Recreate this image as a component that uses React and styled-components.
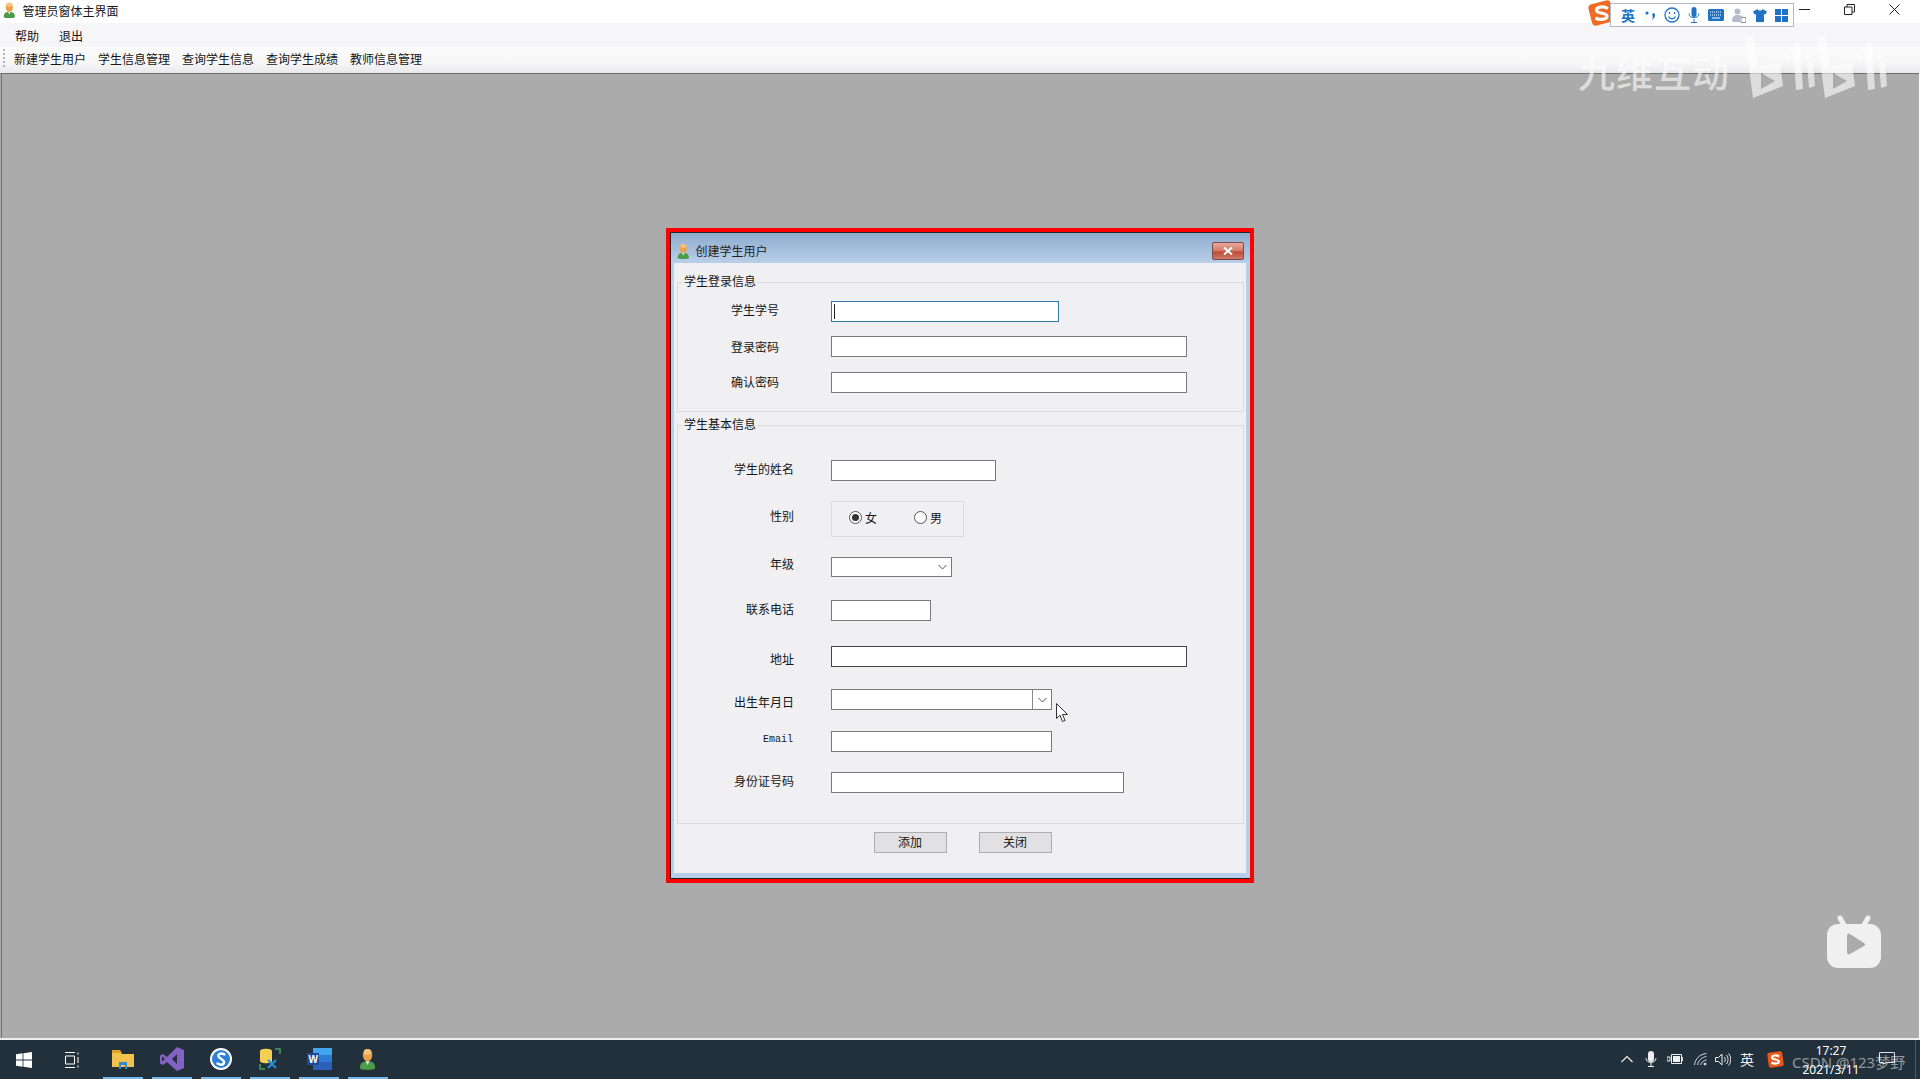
import React from "react";
import styled, { createGlobalStyle } from "styled-components";

const Global = createGlobalStyle`
  html, body { margin: 0; padding: 0; height: 100%; overflow: hidden; background: #fff; }
  body { font-family: "Noto Sans CJK SC", "Noto Sans", sans-serif; font-size: 12px; color: #151515; }
  * { box-sizing: border-box; }
`;

const Screen = styled.div`
  position: relative; width: 1920px; height: 1079px; display: flex; flex-direction: column; overflow: hidden; background: #fff;
`;
const TitleBar = styled.header`
  height: 23px; flex: none; display: flex; align-items: center; padding: 0 0 2px 3px; background: #fff; line-height: 16px;
`;
const TitleText = styled.span` margin-left: 7px; `;
const WindowControls = styled.div`
  margin-left: auto; display: flex; align-items: center; height: 20px; margin-top: -3px; padding-right: 20px; gap: 34px;
`;
const MenuBar = styled.nav`
  height: 24px; flex: none; display: flex; align-items: center; padding-left: 15px; gap: 20px; background: #f6f6f8;
`;
const Toolbar = styled.div`
  height: 26px; flex: none; display: flex; align-items: center; padding: 0 0 3px 3px;
  background: linear-gradient(#fbfbfc, #f7f7f8 60%, #e9e9eb);
`;
const Grip = styled.div`
  width: 2px; height: 20px; margin-right: 9px; background: repeating-linear-gradient(#b5b5b5 0 2px, transparent 2px 4px);
`;
const ToolItem = styled.span` width: 84px; flex: none; `;
const MdiArea = styled.main`
  position: relative; flex: 1; margin-right: 1px; background: #ababab;
  border-top: 1px solid #6e6e6e; border-left: 1px solid #ababab;
  box-shadow: inset 1px 0 0 #707070;
`;
const BottomEdge = styled.div` height: 2px; flex: none; background: #eef0f1; `;
const Taskbar = styled.footer`
  height: 39px; flex: none; position: relative; display: flex; align-items: center; background: #22303c; color: #fff;
`;
const StartSlot = styled.div` width: 103px; display: flex; justify-content: flex-start; padding-left: 16px; gap: 32px; `;
const AppSlot = styled.div`
  width: 40px; height: 39px; margin-right: 9px; display: flex; align-items: center; justify-content: center; padding-top: 1px;
  border-bottom: 2px solid #76b9ed;
`;
const Tray = styled.div`
  margin-left: auto; height: 39px; display: flex; align-items: center; padding-bottom: 1px; padding-right: 136px;
`;
const TrayItem = styled.span` display: flex; align-items: center; margin-left: ${p => p.$ml}px; `;
const TrayLang = styled.span` font-size: 14px; line-height: 16px; color: #f2f2f2; `;
const Clock = styled.div`
  position: absolute; left: 1801px; top: 1px; width: 60px; text-align: center; font-family: "Noto Sans", sans-serif;
  font-size: 12px; line-height: 19px; color: #fff;
`;
const NotifyIcon = styled.div` position: absolute; left: 1879px; top: 12px; `;
const TrayEnd = styled.div` position: absolute; left: 1915px; top: 0; width: 1px; height: 39px; background: #4a5a68; `;
const CsdnMark = styled.div`
  position: absolute; left: 1792px; top: 1053px; font-family: "Noto Sans", "Noto Sans CJK SC", sans-serif; font-size: 15px; line-height: 18px;
  color: rgba(255,255,255,.5); white-space: nowrap;
`;

const Dialog = styled.section`
  position: absolute; left: 665px; top: 154px; width: 588px; height: 655px; border: 4px solid #f00; background: #b9cfe9;
  display: flex; flex-direction: column;
`;
const DialogFrame = styled.div`
  flex: 1; display: flex; flex-direction: column; border-top: 1px solid #222; border-left: 1px solid #222; border-bottom: 1px solid #222;
`;
const DialogTitle = styled.div`
  height: 30px; flex: none; display: flex; align-items: center; padding: 6px 6px 0 6px; line-height: 16px; color: #222;
  background: linear-gradient(#8dabcd, #b9cfe9);
`;
const DialogTitleText = styled.span` margin-left: 6px; `;
const CloseButton = styled.div`
  margin-left: auto; width: 32px; height: 18px; display: flex; align-items: center; justify-content: center; margin-top: -1px;
  border: 1px solid #7c4a48; border-radius: 2px; background: linear-gradient(#e6a99d, #d27766 50%, #bd4a38 55%, #cf7a66);
`;
const Client = styled.div`
  height: 610px; margin: 0 4px 0 3px; padding: 19px 2px 0 3px; background: #f0f0f3;
`;
const Group = styled.div`
  position: relative; height: ${p => p.$h}px; margin-bottom: ${p => p.$mb}px; border: 1px solid #dcdcde;
`;
const Legend = styled.span`
  position: absolute; left: 5px; top: -10px; padding: 0 1px; line-height: 16px; background: #f0f0f3;
`;
const Row = styled.div`
  display: grid; grid-template-columns: 153px 1fr; align-items: start; margin-top: ${p => p.$mt}px;
`;
const Label = styled.label`
  text-align: right; line-height: 16px; padding-right: ${p => p.$pr || 37}px; margin-top: ${p => p.$lt}px;
`;
const MonoLabel = styled(Label)` font-family: "Liberation Mono", monospace; font-size: 10px; `;
const TextBox = styled.input`
  display: block; width: ${p => p.$w}px; height: 21px; padding: 0; margin: 0; outline: none; border-radius: 0;
  border: 1px solid ${p => (p.$focus ? "#2b79ad" : p.$dark ? "#444" : "#7a7a7a")};
  background: ${p => (p.$focus ? "linear-gradient(#222,#222) 2px 2px / 1px 15px no-repeat, #fff" : "#fff")};
`;
const RadioPanel = styled.div`
  width: 133px; height: 36px; display: flex; align-items: center; padding: 0 0 3px 17px; border: 1px solid #dcdcde;
`;
const RadioOption = styled.span` flex: none; display: flex; align-items: center; gap: 3px; width: 65px; line-height: 16px; `;
const RadioMark = styled.span`
  width: 13px; height: 13px; border-radius: 50%; border: 1px solid #555; background: #fff; display: flex; align-items: center; justify-content: center;
  &::after { content: ""; width: 7px; height: 7px; border-radius: 50%; background: ${p => (p.$on ? "#333" : "transparent")}; }
`;
const Combo = styled.div`
  width: ${p => p.$w}px; height: ${p => p.$h}px; display: flex; justify-content: flex-end; border: 1px solid #7a7a7a; background: #fff;
`;
const ComboArrow = styled.div`
  width: ${p => p.$w}px; display: flex; align-items: center; justify-content: center; ${p => p.$split && "border-left: 1px solid #8a8a8a;"}
`;
const Buttons = styled.div` display: flex; justify-content: center; gap: 32px; padding-left: 4px; `;
const Button = styled.button`
  width: 73px; height: 21px; padding: 0 0 2px; border: 1px solid #adadad; border-radius: 0; background: #e1e1e3; color: #151515;
  font: inherit; line-height: 16px;
`;
const Cursor = styled.div` position: absolute; left: 1056px; top: 703px; line-height: 0; `;

const ImeBar = styled.div`
  position: absolute; left: 1610px; top: 3px; width: 184px; height: 24px; display: flex; align-items: center; padding-left: 10px; gap: 0;
  background: #fff; border: 1px solid #b0b8c8; color: #1f72c4;
`;
const ImeLogo = styled.div` position: absolute; left: 1587px; top: 0; line-height: 0; `;
const ImeChar = styled.span` font-size: 14px; font-weight: 700; line-height: 16px; width: 24px; `;
const ImeIcon = styled.span` width: ${p => p.$w}px; line-height: 0; flex: none; display: flex; `;
const WatermarkText = styled.div`
  position: absolute; left: 1578px; top: 46px; font-size: 37px; line-height: 52px; font-weight: 500; letter-spacing: 1px;
  color: rgba(255,255,255,.6); white-space: nowrap;
`;
const WatermarkLogo = styled.div` position: absolute; left: 1745px; top: 35px; line-height: 0; `;
const PlayBadge = styled.div` position: absolute; left: 1826px; top: 915px; line-height: 0; `;

const UserIcon = ({ s = 16 }) => (
  <svg width={s * 0.9} height={s * 1.15} viewBox="0 0 18 23">
    <path d="M1 21c0-5 3-7 8-7s8 2 8 7c0 1-2 2-8 2s-8-1-8-2z" fill="#4d9a4a" />
    <path d="M7 14l2 4 2-4z" fill="#e8f0e4" />
    <ellipse cx="9" cy="7.500" rx="5" ry="6.500" fill="#e9a24a" />
    <ellipse cx="9" cy="4" rx="4" ry="3" fill="#f4c27a" />
  </svg>
);
const Chevron = ({ c = "#555" }) => (
  <svg width="9" height="6" viewBox="0 0 9 6"><path d="M.5 1l4 4 4-4" fill="none" stroke={c} /></svg>
);
const Bilibili = () => {
  const part = (
    <>
      <path fillRule="evenodd" d="M0 3L9 0l3 31 23-3 3 23-30 12zM16 38v16l14-8z" />
      <path d="M38 20l6-1 1 5-6 1zM48 9l7-2 3 47-7 1zM59 20l5-1 1 5-5 1zM62 28l6-1 2 24-6 2z" />
    </>
  );
  return (
    <svg width="142" height="64" viewBox="0 0 142 64" fill="rgba(255,255,255,.6)">
      {part}
      <g transform="translate(72 0)">{part}</g>
    </svg>
  );
};

export default function App() {
  return (
    <Screen>
      <Global />
      <TitleBar>
        <UserIcon s={14} />
        <TitleText>管理员窗体主界面</TitleText>
        <WindowControls>
          <svg width="11" height="11" viewBox="0 0 11 11"><path d="M0 5.500h11" stroke="#222" /></svg>
          <svg width="11" height="11" viewBox="0 0 11 11"><path d="M.5 3h7.500v7.500H.5zM3 3V.5h7.500V8H8" fill="none" stroke="#222" /></svg>
          <svg width="11" height="11" viewBox="0 0 11 11"><path d="M.5.500l10 10M10.500.500l-10 10" stroke="#222" /></svg>
        </WindowControls>
      </TitleBar>
      <MenuBar>
        <span>帮助</span>
        <span>退出</span>
      </MenuBar>
      <Toolbar>
        <Grip />
        {["新建学生用户", "学生信息管理", "查询学生信息", "查询学生成绩", "教师信息管理"].map(t => (
          <ToolItem key={t}>{t}</ToolItem>
        ))}
      </Toolbar>
      <MdiArea>
        <Dialog>
          <DialogFrame>
            <DialogTitle>
              <UserIcon s={14} />
              <DialogTitleText>创建学生用户</DialogTitleText>
              <CloseButton>
                <svg width="10" height="8" viewBox="0 0 10 8"><path d="M1 .5l8 7M9 .5l-8 7" stroke="#fff" strokeWidth="2" /></svg>
              </CloseButton>
            </DialogTitle>
            <Client>
              <Group $h={130} $mb={13}>
                <Legend>学生登录信息</Legend>
                <Row $mt={18}><Label $pr={52} $lt={1}>学生学号</Label><TextBox readOnly $w={228} $focus /></Row>
                <Row $mt={14}><Label $pr={52} $lt={3}>登录密码</Label><TextBox readOnly $w={356} /></Row>
                <Row $mt={15}><Label $pr={52} $lt={2}>确认密码</Label><TextBox readOnly $w={356} /></Row>
              </Group>
              <Group $h={399} $mb={8}>
                <Legend>学生基本信息</Legend>
                <Row $mt={34}><Label $lt={1}>学生的姓名</Label><TextBox readOnly $w={165} /></Row>
                <Row $mt={20}>
                  <Label $lt={7}>性别</Label>
                  <RadioPanel>
                    <RadioOption><RadioMark $on />女</RadioOption>
                    <RadioOption><RadioMark />男</RadioOption>
                  </RadioPanel>
                </Row>
                <Row $mt={20}>
                  <Label $lt={-1}>年级</Label>
                  <Combo $w={121} $h={20}><ComboArrow $w={17}><Chevron /></ComboArrow></Combo>
                </Row>
                <Row $mt={23}><Label $lt={1}>联系电话</Label><TextBox readOnly $w={100} /></Row>
                <Row $mt={25}><Label $lt={5}>地址</Label><TextBox readOnly $w={356} $dark /></Row>
                <Row $mt={22}>
                  <Label $lt={5}>出生年月日</Label>
                  <Combo $w={221} $h={21}><ComboArrow $w={19} $split><Chevron /></ComboArrow></Combo>
                </Row>
                <Row $mt={21}><MonoLabel $lt={1} $pr={38}>Email</MonoLabel><TextBox readOnly $w={221} /></Row>
                <Row $mt={20}><Label $lt={1}>身份证号码</Label><TextBox readOnly $w={293} /></Row>
              </Group>
              <Buttons>
                <Button>添加</Button>
                <Button>关闭</Button>
              </Buttons>
            </Client>
          </DialogFrame>
        </Dialog>
      </MdiArea>
      <BottomEdge />
      <Taskbar>
        <StartSlot>
          <svg width="16" height="16" viewBox="0 0 16 16" fill="#fff"><path d="M0 2.300L6.600 1.300v6.300H0zM7.400 1.200L16 0v7.600H7.400zM0 8.400h6.600v6.300L0 13.700zM7.400 8.400H16V16l-8.600-1.200z" /></svg>
          <svg width="16" height="16" viewBox="0 0 16 16" fill="none" stroke="#fff"><path d="M1 .5h10M1 15.500h10M1.500 4h9v8h-9zM14 .5v2M14 5v6M14 13.500v2" /></svg>
        </StartSlot>
        <AppSlot>
          <svg width="22" height="19" viewBox="0 0 22 19"><path d="M0 2h8l2 2h12v13H0z" fill="#f2c24f" /><path d="M0 0h8l2 3H0z" fill="#e0a02c" /><path d="M7 12h8v7h-2v-4H9v4H7z" fill="#2f8ed0" /></svg>
        </AppSlot>
        <AppSlot>
          <svg width="24" height="24" viewBox="0 0 24 24"><path d="M17 0l7 3v18l-7 3-10-9-4 3-3-1.500V8.500L3 7l4 3zM17 7l-5 5 5 5z" fill="#8661c5" fillRule="evenodd" /><path d="M2 9.500v5L5 12z" fill="#22303c" /></svg>
        </AppSlot>
        <AppSlot>
          <svg width="22" height="22" viewBox="0 0 22 22"><circle cx="11" cy="11" r="11" fill="#fff" /><circle cx="11" cy="11" r="9" fill="#2f7fd6" /><path d="M14.500 6.500C11 4.500 7.500 6 8.500 8.500s6 3 5.500 6-4 2.500-6.500 1" fill="none" stroke="#fff" strokeWidth="2.400" strokeLinecap="round" /></svg>
        </AppSlot>
        <AppSlot>
          <svg width="22" height="22" viewBox="0 0 22 22"><path d="M1 3c0-3 12-3 12 0v10c0 3-12 3-12 0z" fill="#f4cf55" /><path d="M16 1h5v5M1 16v5h5" fill="none" stroke="#4aa05a" strokeWidth="1.500" /><path d="M9 12l8 8M17 12l-8 8" stroke="#2a8fd8" strokeWidth="2" /></svg>
        </AppSlot>
        <AppSlot>
          <svg width="25" height="22" viewBox="0 0 25 22"><path d="M6 0h19v22H6z" fill="#2b5fb8" /><path d="M6 0h19v7H6z" fill="#41a5ee" /><path d="M6 7h19v7H6z" fill="#2b7cd3" /><path d="M0 5h12v12H0z" fill="#1a4a9c" /><text x="1.500" y="15" fontSize="10" fontWeight="700" fontFamily="Liberation Sans" fill="#fff">W</text></svg>
        </AppSlot>
        <AppSlot>
          <UserIcon s={19} />
        </AppSlot>
        <Tray>
          <TrayItem $ml={0}><svg width="12" height="8" viewBox="0 0 12 8"><path d="M.5 7L6 1.500 11.500 7" fill="none" stroke="#eee" strokeWidth="1.200" /></svg></TrayItem>
          <TrayItem $ml={12}><svg width="12" height="16" viewBox="0 0 12 16"><rect x="3" y="0" width="6" height="11" rx="3" fill="#eee" /><path d="M1 7c0 6 10 6 10 0M6 12v3M3 15.500h6" fill="none" stroke="#eee" /></svg></TrayItem>
          <TrayItem $ml={10}><svg width="16" height="10" viewBox="0 0 16 10"><path d="M0 3h3v4H0zM4.500 .5h10v9h-10zM15 3.500h1v3h-1z" fill="none" stroke="#eee" /><path d="M6 2h7v6H6z" fill="#eee" /></svg></TrayItem>
          <TrayItem $ml={11}><svg width="13" height="13" viewBox="0 0 13 13" fill="none" stroke="#cfd6da"><path d="M.5 12C1 6 6 1 12.500.5M3.500 12C4 8 8 4 12.500 3.500M6.500 12c.5-2 3-5 6-5" /><circle cx="11" cy="11" r="1" fill="#eee" /></svg></TrayItem>
          <TrayItem $ml={8}><svg width="16" height="13" viewBox="0 0 16 13" fill="none" stroke="#eee"><path d="M.5 4.500h3L7 1v11L3.500 8.500h-3zM9.500 4c1 1.500 1 3.500 0 5M11.500 2c2 3 2 6 0 9M13.500 .5c3 3.500 3 8.500 0 12" /></svg></TrayItem>
          <TrayItem $ml={9}><TrayLang>英</TrayLang></TrayItem>
          <TrayItem $ml={13}><svg width="17" height="17" viewBox="0 0 17 17"><rect x="1" y="1" width="15" height="15" rx="2" fill="#e8581c" transform="rotate(-8 8.500 8.500)" /><path d="M12 5.500C9 3.500 5 4.500 5 6.500s7 2 7 4-4.500 3-7.500 1" fill="none" stroke="#fff" strokeWidth="2.200" /></svg></TrayItem>
        </Tray>
        <Clock>17:27<br />2021/3/11</Clock>
        <NotifyIcon>
          <svg width="16" height="14" viewBox="0 0 16 14"><path d="M.5.500h15v10h-9l-2 2v-2h-4z" fill="none" stroke="#dde" /></svg>
        </NotifyIcon>
        <TrayEnd />
      </Taskbar>

      <WatermarkText>九维互动</WatermarkText>
      <WatermarkLogo><Bilibili /></WatermarkLogo>
      <ImeLogo>
        <svg width="29" height="27" viewBox="0 0 29 27"><rect x="3" y="2" width="23" height="22" rx="4" fill="#ef6a22" transform="rotate(-14 14.500 13.500)" /><path d="M21 8.500C16 5.500 9 7 9.500 10.500s10.500 2 10.500 5.500-7 4.500-11.500 2" fill="none" stroke="#fff" strokeWidth="3.200" /></svg>
      </ImeLogo>
      <ImeBar>
        <ImeChar>英</ImeChar>
        <ImeIcon $w={19}><svg width="12" height="12" viewBox="0 0 12 12" fill="#1f72c4"><circle cx="2" cy="4" r="1.600" /><path d="M9 4c2 2 1 5-2 7 1-2 1-4 0-6z" /></svg></ImeIcon>
        <ImeIcon $w={24}><svg width="16" height="16" viewBox="0 0 16 16" fill="none" stroke="#1f72c4" strokeWidth="1.300"><circle cx="8" cy="8" r="7" /><path d="M4.500 9.500c1.500 3 5.500 3 7 0M5.500 5v2M10.500 5v2" /></svg></ImeIcon>
        <ImeIcon $w={20}><svg width="12" height="16" viewBox="0 0 12 16"><rect x="3.500" y="0" width="5" height="10" rx="2.500" fill="#1f72c4" /><path d="M1 6.500c0 5.500 10 5.500 10 0M6 12v3M3 15.500h6" fill="none" stroke="#1f72c4" /></svg></ImeIcon>
        <ImeIcon $w={24}><svg width="16" height="12" viewBox="0 0 16 12"><rect width="16" height="12" rx="1.500" fill="#1f72c4" /><path d="M2 3h12M2 6h12" stroke="#fff" strokeDasharray="1 1" /><path d="M4 9h8" stroke="#fff" /></svg></ImeIcon>
        <ImeIcon $w={21}><svg width="14" height="15" viewBox="0 0 14 15"><circle cx="5.500" cy="3.500" r="3" fill="#b4bccb" /><path d="M0 13c0-4 2-6 5.500-6s5 1 5.500 2H8v5H1z" fill="#b4bccb" /><rect x="9" y="9.500" width="5" height="5" fill="#fff" stroke="#8a94a8" /></svg></ImeIcon>
        <ImeIcon $w={22}><svg width="14" height="13" viewBox="0 0 14 13"><path d="M4.500 0L0 2.500l1.500 3L3 5v8h8V5l1.500.5 1.500-3L9.500 0C9 2 5 2 4.500 0z" fill="#1f72c4" /></svg></ImeIcon>
        <ImeIcon $w={14}><svg width="13" height="13" viewBox="0 0 13 13" fill="#1f72c4"><path d="M0 0h6v6H0zM7 0h6v6H7zM0 7h6v6H0zM7 7h6v6H7z" /></svg></ImeIcon>
      </ImeBar>
      <Cursor>
        <svg width="13" height="20" viewBox="0 0 13 20"><path d="M.5.500v15l3.500-3.300 2.500 6.300 2.600-1-2.600-6H11.500z" fill="#fff" stroke="#333" /></svg>
      </Cursor>
      <PlayBadge>
        <svg width="56" height="56" viewBox="0 0 56 56">
          <path d="M18 10L14 3M38 10l4-7" stroke="#f0f0f0" strokeWidth="5" strokeLinecap="round" />
          <rect x="1" y="9" width="54" height="44" rx="11" fill="#f0f0f0" />
          <path d="M21 21c0-2 1-3 3-2l14 9c1.500 1 1.500 2 0 3l-14 8c-2 1-3 0-3-2z" fill="#ababab" />
        </svg>
      </PlayBadge>
      <CsdnMark>CSDN @123梦野</CsdnMark>
    </Screen>
  );
}
